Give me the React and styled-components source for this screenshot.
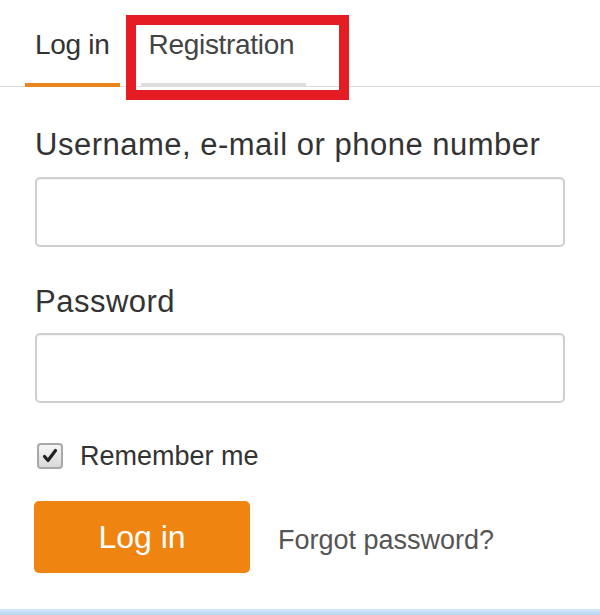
import styled, { createGlobalStyle } from 'styled-components'

const GlobalStyle = createGlobalStyle`
   html, body {
      margin: 0;
      padding: 0;
      background: #ffffff;
   }
   body {
      font-family: 'Liberation Sans', Arial, sans-serif;
      color: #333333;
      width: 600px;
      height: 615px;
      overflow: hidden;
   }
`

const tabs = [
   { id: 'login', label: 'Log in', active: true },
   { id: 'register', label: 'Registration', active: false },
]

export default function App() {
   return (
      <>
         <GlobalStyle />
         <Page>
            <TabBar>
               {tabs.map((tab) => (
                  <Tab key={tab.id} $active={tab.active} $pad={tab.active ? '0 10px' : '0 12px 0 8px'}>
                     {tab.label}
                  </Tab>
               ))}
               <Highlight />
            </TabBar>
            <Form>
               <Field $top="41px">
                  <Label>Username, e-mail or phone number</Label>
                  <Input type="text" />
               </Field>
               <Field $top="38px">
                  <Label>Password</Label>
                  <Input type="password" />
               </Field>
               <RememberRow>
                  <CheckBox>
                     <svg width="18" height="18" viewBox="0 0 18 18">
                        <path
                           d="M3.5 9.5 L7 13.5 L14.5 3.5"
                           fill="none"
                           stroke="#222"
                           strokeWidth="3.2"
                           strokeLinecap="round"
                           strokeLinejoin="round"
                        />
                     </svg>
                  </CheckBox>
                  <RememberText>Remember me</RememberText>
               </RememberRow>
               <Actions>
                  <SubmitButton type="button">Log in</SubmitButton>
                  <ForgotLink href="#">Forgot password?</ForgotLink>
               </Actions>
            </Form>
            <BottomStrip />
         </Page>
      </>
   )
}

const Page = styled.div`
   display: flex;
   flex-direction: column;
   width: 600px;
   height: 615px;
`

const TabBar = styled.div`
   position: relative;
   display: flex;
   gap: 21px;
   padding: 29px 0 0 25px;
   border-bottom: 1px solid #dcdcdc;
`

const Tab = styled.div`
   padding: ${({ $pad }) => $pad};
   padding-bottom: 22px;
   margin-bottom: -1px;
   font-size: 28px;
   line-height: 32px;
   letter-spacing: -0.3px;
   color: ${({ $active }) => ($active ? '#333333' : '#444444')};
   border-bottom: 4px solid ${({ $active }) => ($active ? '#e8861c' : '#dedede')};
`

const Highlight = styled.div`
   position: absolute;
   left: 126px;
   top: 15px;
   width: 223px;
   height: 85px;
   box-sizing: border-box;
   border: 10.5px solid #e51c24;
   pointer-events: none;
`

const Form = styled.div`
   display: flex;
   flex-direction: column;
   padding: 0 35px;
`

const Field = styled.div`
   display: flex;
   flex-direction: column;
   margin-top: ${({ $top }) => $top};
`

const Label = styled.label`
   font-size: 31px;
   line-height: 34px;
   letter-spacing: 0.5px;
   color: #333333;
   margin-bottom: 14.5px;
`

const Input = styled.input`
   box-sizing: border-box;
   width: 100%;
   height: 70px;
   border: 2px solid #cfcfcf;
   border-radius: 5px;
   box-shadow: inset 0 1px 2px rgba(0, 0, 0, 0.06);
   background: #ffffff;
   outline: none;
   font-family: inherit;
   font-size: 26px;
   padding: 0 14px;
`

const RememberRow = styled.div`
   display: flex;
   align-items: center;
   gap: 17px;
   height: 30px;
   margin-top: 38px;
   padding-left: 2px;
`

const CheckBox = styled.span`
   box-sizing: border-box;
   display: flex;
   align-items: center;
   justify-content: center;
   width: 26px;
   height: 26px;
   border: 2px solid #a8a8a8;
   border-radius: 4px;
   background: linear-gradient(#f6f6f6, #d9d9d9);
`

const RememberText = styled.span`
   font-size: 27px;
   line-height: 30px;
   color: #333333;
`

const Actions = styled.div`
   display: flex;
   align-items: center;
   gap: 28px;
   margin-top: 30px;
`

const SubmitButton = styled.button`
   width: 216px;
   height: 72px;
   margin-left: -1px;
   border: none;
   border-radius: 5px;
   background: #ef8410;
   color: #ffffff;
   font-family: inherit;
   font-size: 32px;
   line-height: 34px;
   padding: 0;
   cursor: pointer;
`

const ForgotLink = styled.a`
   font-size: 27px;
   line-height: 30px;
   padding-top: 6px;
   color: #555555;
   text-decoration: none;
`

const BottomStrip = styled.div`
   margin-top: auto;
   height: 6px;
   background: linear-gradient(#d6e8f8, #b8d5f0);
`
